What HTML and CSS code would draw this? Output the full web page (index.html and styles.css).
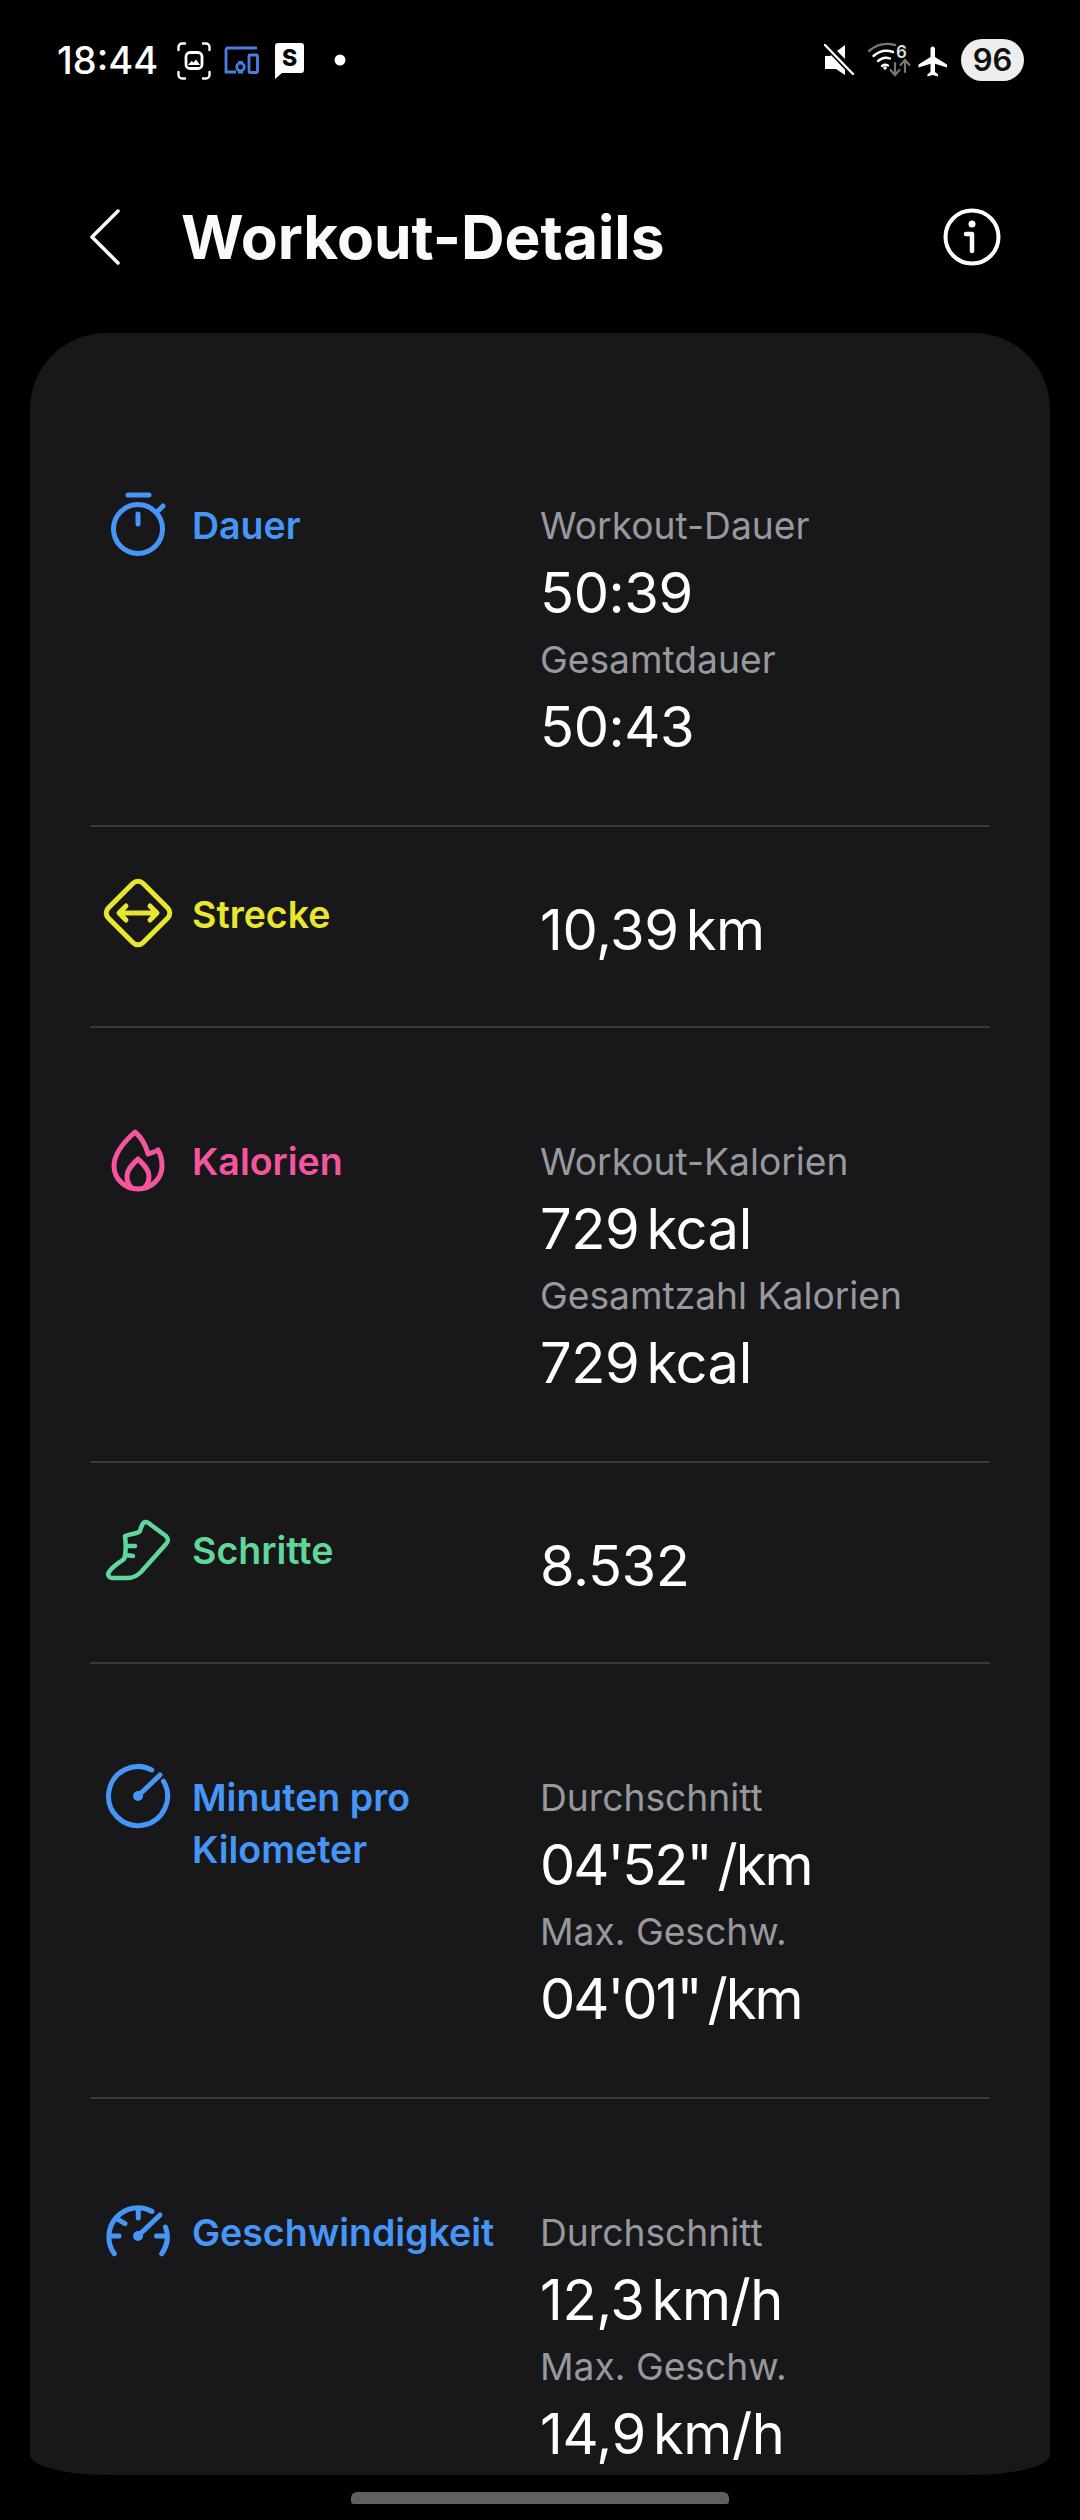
FILE: index.html
```html
<!DOCTYPE html>
<html lang="de">
<head>
  <meta charset="UTF-8" />
  <meta name="viewport" content="width=device-width, initial-scale=1" />
  <title>Workout-Details</title>
  <link rel="stylesheet" href="styles.css">
</head>
<body>
  <div class="status-bar">
    <div class="status-left">
      <span class="time">18:44</span>
      <svg class="st-icon" width="34" height="42" viewBox="0 0 34 42" fill="none" stroke="#fff" stroke-width="2.4" stroke-linecap="round">
        <path d="M1.500 11V8a3.500 3.500 0 0 1 3.500-3.500h3M26 4.500h3A3.500 3.500 0 0 1 32.500 8v3M32.500 33v3a3.500 3.500 0 0 1-3.500 3.500h-3M8 39.500H5A3.500 3.500 0 0 1 1.500 36v-3"/>
        <rect x="9" y="13.500" width="16" height="16" rx="4" stroke-width="2.800"/>
        <path d="M11 26l3.500-4 2 1.500 2.500-3 4 5.500z" fill="#fff" stroke="none"/>
      </svg>
      <svg class="st-icon" width="35" height="42" viewBox="0 0 35 42" fill="none" stroke="#4a7fe0" stroke-width="2.800">
        <path d="M33 9H4a2 2 0 0 0-2 2v22h10"/>
        <rect x="25" y="16" width="8.500" height="17.500" rx="1"/>
        <circle cx="16.500" cy="28" r="3.800" stroke-width="2.800"/>
        <path d="M14 23h5M14 33.500h5" stroke-width="2"/>
      </svg>
      <svg class="st-icon" width="32" height="42" viewBox="0 0 32 42">
        <path d="M6 4h23a3 3 0 0 1 3 3v24a3 3 0 0 1-3 3H10l-7 6V7a3 3 0 0 1 3-3z" fill="#fff"/>
        <text class="st-s" x="17.500" y="27" text-anchor="middle">S</text>
      </svg>
      <svg class="st-icon" width="29" height="42" viewBox="0 0 29 42"><circle cx="23" cy="21" r="5.500" fill="#fff"/></svg>
    </div>
    <div class="status-right">
      <svg class="st-icon" width="38" height="42" viewBox="0 0 38 42">
        <path d="M1 17h5l3-2 12 13v8l-9-6H1zM21 6v14l-8-8z" fill="#fff"/>
        <path d="M1 7l27 28" stroke="#000" stroke-width="4"/>
        <path d="M1 6l28 29" stroke="#fff" stroke-width="2.400" stroke-linecap="round"/>
      </svg>
      <svg class="st-icon" width="44" height="42" viewBox="0 0 44 42" fill="none" stroke-linecap="round">
        <path d="M1 12C9 5 18 3.500 27 6" stroke="#777" stroke-width="2.400"/>
        <path d="M5.500 17C11 12 18 10.500 25 13M10 22c4-3.500 8-4 12-2.500M14 27c2-1.500 4-1.500 6-.5" stroke="#fff" stroke-width="2.400"/>
        <circle cx="17" cy="29" r="1.800" fill="#fff"/>
        <path d="M27 24v12M22.500 31l4.500 5 4.500-5" stroke="#777" stroke-width="2.200"/>
        <path d="M37 33V21M32.500 26l4.500-5 4.500 5" stroke="#777" stroke-width="2.200"/>
        <text class="st-six" x="28" y="19">6</text>
      </svg>
      <svg class="st-icon" width="37" height="42" viewBox="0 0 37 42">
        <path transform="translate(-2.500 4.500) scale(1.500)" d="M21 16v-2l-8-5V3.500c0-.83-.67-1.500-1.500-1.500S10 2.670 10 3.500V9l-8 5v2l8-2.500V19l-2 1.500V22l3.500-1 3.500 1v-1.500L13 19v-5.500l8 2.500z" fill="#fff"/>
      </svg>
      <span class="battery">96</span>
    </div>
  </div>

  <header class="top-bar">
    <svg class="back" width="30" height="56" viewBox="0 0 30 56" fill="none" stroke="#fff" stroke-width="3.500" stroke-linecap="round" stroke-linejoin="round">
      <path d="M28 2L2 28l26 26"/>
    </svg>
    <h1>Workout-Details</h1>
    <svg class="info" width="58" height="58" viewBox="0 0 58 58" fill="none" stroke="#fff" stroke-linecap="round">
      <circle cx="29" cy="29" r="26.500" stroke-width="4"/>
      <path d="M23 26h6v17" stroke-width="4.500" stroke-linejoin="round"/>
      <circle cx="29" cy="16" r="3.500" fill="#fff" stroke="none"/>
    </svg>
  </header>

  <main class="card">
    <section class="row">
      <div class="metric blue">
        <svg class="metric-icon" width="72" height="72" viewBox="0 0 72 72" fill="none" stroke="currentColor" stroke-width="5" stroke-linecap="round">
          <circle cx="36" cy="41" r="24.500"/>
          <path d="M26 7h21M55 24l6-6M36 26v10"/>
        </svg>
        <span class="metric-name">Dauer</span>
      </div>
      <div class="values">
        <div class="val-label">Workout-Dauer</div>
        <div class="val">50:39</div>
        <div class="val-label">Gesamtdauer</div>
        <div class="val">50:43</div>
      </div>
    </section>

    <section class="row single">
      <div class="metric yellow">
        <svg class="metric-icon" width="72" height="72" viewBox="0 0 72 72" fill="none" stroke="currentColor" stroke-width="5" stroke-linecap="round" stroke-linejoin="round">
          <rect x="11.500" y="11.500" width="49" height="49" rx="7" transform="rotate(45 36 36)"/>
          <path d="M18 36h36M24 29l-7 7 7 7M48 29l7 7-7 7"/>
        </svg>
        <span class="metric-name">Strecke</span>
      </div>
      <div class="values">
        <div class="val">10,39<span class="unit">km</span></div>
      </div>
    </section>

    <section class="row">
      <div class="metric pink">
        <svg class="metric-icon" width="72" height="72" viewBox="0 0 72 72" fill="none" stroke="currentColor" stroke-width="5" stroke-linecap="round" stroke-linejoin="round">
          <path d="M33 8C40 14 44 22 46 30C49 29 53 28 56 26C59 31 60 36 60 42C60 55 49 65 36 65C23 65 12 55 12 42C12 28 24 16 33 8Z"/>
          <path d="M29 63C26 60 25 56 25 52C25 45 31 40 36 35C41 40 47 45 47 52C47 56 46 60 43 63"/>
        </svg>
        <span class="metric-name">Kalorien</span>
      </div>
      <div class="values">
        <div class="val-label">Workout-Kalorien</div>
        <div class="val">729<span class="unit">kcal</span></div>
        <div class="val-label">Gesamtzahl Kalorien</div>
        <div class="val">729<span class="unit">kcal</span></div>
      </div>
    </section>

    <section class="row single">
      <div class="metric green">
        <svg class="metric-icon" width="72" height="72" viewBox="0 0 72 72" fill="none" stroke="currentColor" stroke-width="4.500" stroke-linecap="round" stroke-linejoin="round">
          <path d="M23 23C30 20 36 21 38 18C39 14 40 10 43 9C45 8.500 47 10 49 12L64 23C67 26 66 29 64 31L39 59C35 63 31 65 26 65L11 65C7 65 5 62 7 59C11 53 17 50 22 46C24 42 24 30 23 23Z"/>
          <path d="M25 33h8M23 42l8 1"/>
        </svg>
        <span class="metric-name">Schritte</span>
      </div>
      <div class="values">
        <div class="val">8.532</div>
      </div>
    </section>

    <section class="row">
      <div class="metric blue">
        <svg class="metric-icon" width="72" height="72" viewBox="0 0 72 72" fill="none" stroke="currentColor" stroke-width="5" stroke-linecap="round">
          <path d="M61.500 21.200A29.500 29.500 0 1 1 49.800 10"/>
          <path d="M36 36L58 15"/>
          <circle cx="36" cy="36" r="5" fill="currentColor" stroke="none"/>
        </svg>
        <span class="metric-name">Minuten pro Kilometer</span>
      </div>
      <div class="values">
        <div class="val-label">Durchschnitt</div>
        <div class="val pace">04'52"<span class="unit">/km</span></div>
        <div class="val-label">Max. Geschw.</div>
        <div class="val pace">04'01"<span class="unit">/km</span></div>
      </div>
    </section>

    <section class="row last">
      <div class="metric blue">
        <svg class="metric-icon" width="72" height="72" viewBox="0 0 72 72" fill="none" stroke="currentColor" stroke-width="5" stroke-linecap="round">
          <path d="M12.300 58.700A29 29 0 0 1 50 16.500M59.700 58.700A29 29 0 0 0 63.500 32"/>
          <path d="M10 41h7M54.500 41h7M36.300 16v7M16.300 24.700l6.700 4M36 41L58 20"/>
          <circle cx="36" cy="41" r="5" fill="currentColor" stroke="none"/>
        </svg>
        <span class="metric-name">Geschwindigkeit</span>
      </div>
      <div class="values">
        <div class="val-label">Durchschnitt</div>
        <div class="val">12,3<span class="unit">km/h</span></div>
        <div class="val-label">Max. Geschw.</div>
        <div class="val">14,9<span class="unit">km/h</span></div>
      </div>
    </section>
  </main>

  <div class="home-bar"></div>
</body>
</html>
```

FILE: styles.css
```css
/* Reset and base */
* {
  box-sizing: border-box;
  margin: 0;
  padding: 0;
}
body {
  font-family: Inter, "Noto Sans", sans-serif;
  background: #000;
  color: #fff;
  width: 1080px;
  height: 2520px;
  overflow: hidden;
}

/* Status bar */
.status-bar {
  height: 120px;
  padding: 39px 56px 39px 57px;
  display: flex;
  justify-content: space-between;
}
.status-left {
  display: flex;
  align-items: center;
  gap: 13px;
}
.status-right {
  display: flex;
  align-items: center;
  gap: 6px;
}
.time {
  width: 100px;
  font-size: 38px;
  font-weight: 500;
  margin-right: 7px;
  white-space: nowrap;
}
.st-icon {
  display: block;
  flex-shrink: 0;
}
.st-s {
  font-size: 23px;
  font-weight: 800;
  fill: #000;
}
.st-six {
  font-size: 17px;
  font-weight: 600;
  fill: #ddd;
}
.battery {
  width: 63px;
  height: 42px;
  border-radius: 21px;
  background: #eee;
  color: #111;
  font-size: 31px;
  font-weight: 600;
  line-height: 42px;
  text-align: center;
}

/* Header */
.top-bar {
  height: 213px;
  padding: 20px 79px 0 90px;
  display: flex;
  align-items: center;
}
.top-bar h1 {
  margin-left: 61px;
  font-size: 60.4px;
  font-weight: 700;
  color: #fafafc;
}
.info {
  margin-left: auto;
}

/* Card */
.card {
  height: 2142px;
  margin: 0 30px;
  padding: 59px 60px 0;
  background: #18181a;
  border-radius: 76px 76px 80px 80px / 76px 76px 20px 20px;
  overflow: hidden;
}
.row {
  display: grid;
  grid-template-columns: 450px 1fr;
  padding: 107px 0 58px;
  border-bottom: 2px solid #3a3a3c;
}
.row.single {
  padding: 63px 0 56px;
}
.row.last {
  border-bottom: none;
}
.metric {
  display: flex;
  align-items: flex-start;
  gap: 18px;
  padding-left: 12px;
  margin-top: 1px;
}
.row.single .metric {
  margin-top: -1px;
}
.metric-icon {
  flex-shrink: 0;
  margin-top: -12px;
}
.metric-name {
  font-size: 37.5px;
  font-weight: 600;
  line-height: 52px;
}
.blue { color: #4596f7; }
.yellow { color: #e8e62e; }
.pink { color: #f5559e; }
.green { color: #5fd79b; }

.val-label {
  font-size: 37.2px;
  line-height: 54px;
  color: #98989e;
}
.val {
  font-size: 56px;
  line-height: 80px;
  letter-spacing: -0.4px;
  color: #fff;
  white-space: nowrap;
}
.val.pace {
  letter-spacing: -2px;
}
.unit {
  margin-left: 7px;
}

/* Gesture bar */
.home-bar {
  width: 378px;
  height: 12px;
  margin: 17px auto 0;
  background: #606060;
  border-radius: 6px 6px 3px 3px;
}
```
